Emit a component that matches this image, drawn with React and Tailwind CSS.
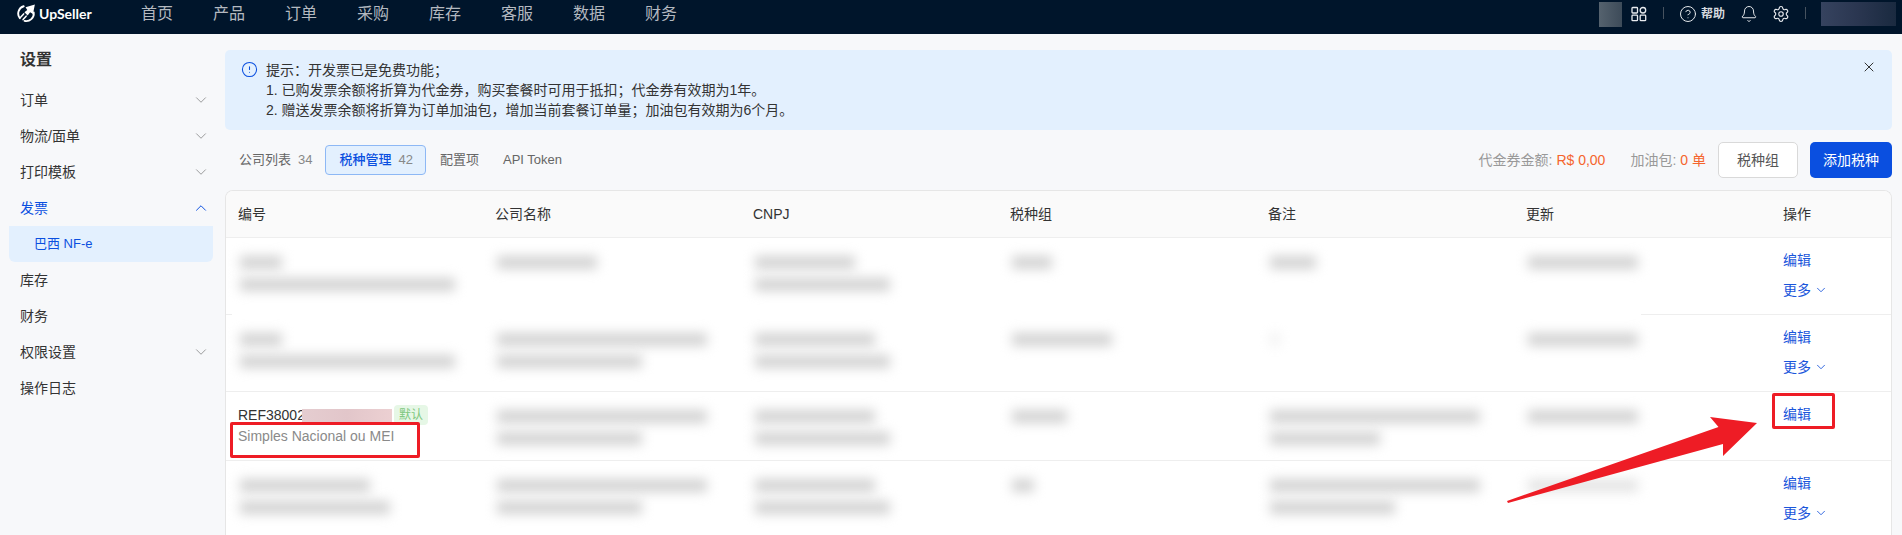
import { Bell, ChevronDown, ChevronUp, CircleAlert, CircleHelp, Settings, X } from 'lucide-react'

const navItems = ['首页', '产品', '订单', '采购', '库存', '客服', '数据', '财务']

const menuItems = [
  { label: '订单', arrow: true },
  { label: '物流/面单', arrow: true },
  { label: '打印模板', arrow: true },
  { label: '发票', open: true },
  { label: '巴西 NF-e', sub: true },
  { label: '库存' },
  { label: '财务' },
  { label: '权限设置', arrow: true },
  { label: '操作日志' },
]

const columns = ['编号', '公司名称', 'CNPJ', '税种组', '备注', '更新', '操作']

// blurred cell contents, one array per column
const rows = [
  {
    height: 'h-[76px]',
    cells: [
      ['w-[42px]', 'w-[215px]'],
      ['w-[100px]'],
      ['w-[100px]', 'w-[135px]'],
      ['w-[40px]'],
      ['w-[46px]'],
      ['w-[110px]'],
    ],
    more: true,
  },
  {
    height: 'h-[76px]',
    cells: [
      ['w-[42px]', 'w-[215px]'],
      ['w-[210px]', 'w-[145px]'],
      ['w-[120px]', 'w-[135px]'],
      ['w-[100px]'],
      ['w-[10px] opacity-30'],
      ['w-[110px]'],
    ],
    more: true,
  },
  {
    height: 'h-[68px]',
    cells: [
      null,
      ['w-[210px]', 'w-[145px]'],
      ['w-[120px]', 'w-[135px]'],
      ['w-[55px]'],
      ['w-[210px]', 'w-[110px]'],
      ['w-[110px]'],
    ],
    more: false,
  },
  {
    height: 'h-[75px]',
    cells: [
      ['w-[130px]', 'w-[150px]'],
      ['w-[210px]', 'w-[145px]'],
      ['w-[120px]', 'w-[135px]'],
      ['w-[22px]'],
      ['w-[210px]', 'w-[125px]'],
      ['w-[110px] opacity-60'],
    ],
    more: true,
  },
]

const BlurLine = ({ width }) => (
  <div className={`h-[13px] bg-[#d2d2d2] blur-[6px] ${width}`}></div>
)

const AppsIcon = () => (
  <svg width="16" height="16" viewBox="0 0 16 16" fill="none" stroke="#e8ebef" strokeWidth="1.3">
    <rect x="1" y="1.5" width="5.5" height="5.5" rx="0.8" />
    <rect x="9.2" y="1.5" width="5.5" height="5.5" rx="2.7" />
    <rect x="1" y="9.2" width="5.5" height="5.5" rx="0.8" />
    <rect x="9.2" y="9.2" width="5.5" height="5.5" rx="0.8" />
  </svg>
)

const Logo = () => (
  <svg width="19" height="19" viewBox="0 0 20 20" fill="none">
    <path d="M7 2.4A8 8 0 0 0 3 15" stroke="#fff" strokeWidth="2" strokeLinecap="round" />
    <path d="M17.6 9A8 8 0 0 1 8 17.8" stroke="#fff" strokeWidth="2" strokeLinecap="round" />
    <path d="M18.8 0.6 16.8 10.4 13.8 8.6 11.2 12 7.8 8.8 10.8 6.2 9 3.4Z" fill="#fff" />
    <path d="M7 10.4 3.8 14M9.6 12.8 6.4 16.4" stroke="#fff" strokeWidth="1.6" strokeLinecap="round" />
  </svg>
)

const App = () => {
  return (
    <div className="h-[535px] w-[1902px] overflow-hidden relative bg-[#f7f8fa] font-['Liberation_Sans','Noto_Sans_CJK_SC',sans-serif] text-[14px] text-[#333]">
      <header className="h-[34px] flex bg-[#00152b] overflow-hidden">
        <div className="w-[141px] shrink-0 flex items-start pl-[17px] pt-[4px] gap-[3px]">
          <Logo />
          <span className="font-['Lato',sans-serif] text-[14px] leading-[20px] font-bold text-white">UpSeller</span>
        </div>
        <nav className="flex gap-[40px] pt-[2px]">
          {navItems.map((item) => (
            <span key={item} className="text-[16px] leading-[24px] text-[#b4b9c0]">{item}</span>
          ))}
        </nav>
        <div className="ml-auto flex items-start text-[#e8ebef]">
          <div className="w-[23px] h-[25px] mt-[2px] bg-[linear-gradient(90deg,#55626e,#3d4b59)]"></div>
          <div className="ml-[9px] mt-[6px]"><AppsIcon /></div>
          <div className="ml-[16px] mt-[7px] w-px h-[12px] bg-[#46525f]"></div>
          <CircleHelp size={18} strokeWidth={1.3} className="ml-[15px] mt-[5px]" />
          <span className="ml-[4px] mt-[4px] text-[12px] leading-[20px] font-bold text-[#d5d9de]">帮助</span>
          <Bell size={18} strokeWidth={1.3} className="ml-[15px] mt-[5px]" />
          <Settings size={18} strokeWidth={1.5} className="ml-[14px] mt-[5px]" />
          <div className="ml-[15px] mt-[7px] w-px h-[12px] bg-[#46525f]"></div>
          <div className="ml-[15px] mr-[6px] mt-[2px] w-[75px] h-[24px] bg-[linear-gradient(90deg,#36435f,#2a3650,#1a2a40)]"></div>
        </div>
      </header>

      <div className="flex">
        <aside className="w-[225px] shrink-0 pt-[14px]">
          <h2 className="pl-[20px] text-[16px] leading-[24px] font-semibold text-[#333] mb-[10px]">设置</h2>
          {menuItems.map((item) => (
            <div
              key={item.label}
              className={`h-9 mx-[9px] flex items-center rounded-b-md ${item.sub ? 'w-[204px] pl-[25px] bg-[#e3f0fe] text-[13px] text-[#0a4fe0]' : 'pl-[11px]'} ${item.open ? 'text-[#0a4fe0]' : ''}`}
            >
              <span>{item.label}</span>
              {item.arrow && <ChevronDown size={18} strokeWidth={1.1} className="ml-auto mr-[6px] text-[#888]" />}
              {item.open && <ChevronUp size={18} strokeWidth={1.3} className="ml-auto mr-[6px] text-[#0a4fe0]" />}
            </div>
          ))}
        </aside>

        <main className="flex-1 min-w-0 pr-[10px] pt-4">
          <div className="h-20 rounded-[5px] bg-[#e3f0fe] flex pl-4 pt-[10px] pr-[16px]">
            <CircleAlert size={17} strokeWidth={1.5} className="text-[#0a4fe0] mt-[1px] shrink-0" />
            <div className="ml-[8px] text-[14px] leading-[20px] text-[#333]">
              <p>提示：开发票已是免费功能；</p>
              <p>1. 已购发票余额将折算为代金券，购买套餐时可用于抵扣；代金券有效期为1年。</p>
              <p>2. 赠送发票余额将折算为订单加油包，增加当前套餐订单量；加油包有效期为6个月。</p>
            </div>
            <X size={16} strokeWidth={1.5} className="ml-auto mr-[-1px] text-[#333] mt-[-1px]" />
          </div>

          <div className="mt-3 h-9 flex items-center text-[13px]">
            <div className="pl-[14px] pr-[13px] text-[#666]">公司列表<span className="ml-[7px] text-[#888]">34</span></div>
            <div className="h-[30px] pl-[13px] pr-[12px] flex items-center rounded-[4px] border border-[#8db8f5] bg-[#e3f0fe] font-medium text-[#0a4fe0]">
              税种管理<span className="ml-[7px] font-normal text-[#888]">42</span>
            </div>
            <div className="pl-[14px] pr-[13px] text-[#666]">配置项</div>
            <div className="px-[11px] text-[#666]">API Token</div>
            <div className="ml-auto flex items-center text-[14px]">
              <span className="text-[#999]">代金券金额:</span>
              <span className="ml-[4px] text-[#f5652d]">R$ 0,00</span>
              <span className="ml-[25px] text-[#999]">加油包:</span>
              <span className="ml-[4px] text-[#f5652d]">0 单</span>
              <button className="ml-[12px] w-[80px] h-9 rounded-[5px] border border-[#d9d9d9] bg-white text-[#555]">税种组</button>
              <button className="ml-[12px] w-[82px] h-9 rounded-[5px] bg-[#0a4fe0] text-white">添加税种</button>
            </div>
          </div>

          <div className="mt-3 rounded-t-[8px] border border-b-0 border-[#e6e6e6] bg-white overflow-hidden">
            <div className="h-[47px] grid grid-cols-[257px_258px_257px_258px_258px_257px_1fr] items-center bg-[#fafafa] border-b border-[#eee] text-[#333]">
              {columns.map((col) => (
                <div key={col} className="pl-3">{col}</div>
              ))}
            </div>

            {rows.map((row, i) => (
              <div key={i}>
                <div className={`${row.height} grid grid-cols-[257px_258px_257px_258px_258px_257px_1fr] overflow-hidden`}>
                  {row.cells.map((lines, c) =>
                    lines ? (
                      <div key={c} className="pl-[14px] pt-[18px] flex flex-col gap-[9px]">
                        {lines.map((width, l) => <BlurLine key={l} width={width} />)}
                      </div>
                    ) : (
                      <div key={c} className="pl-3 pt-[13px]">
                        <div className="flex items-center h-[20px]">
                          <span className="whitespace-nowrap text-[#333]">REF38002</span>
                          <div className="relative ml-[-3px] w-[90px] h-[13px] bg-[linear-gradient(90deg,#e5cdd0,#e2c6ca,#ecd0d2)]"></div>
                          <span className="ml-[2px] px-[5px] rounded-[4px] bg-[#e6f7e6] text-[12px] leading-[20px] text-[#7fc77f]">默认</span>
                        </div>
                        <div className="mt-[1px] leading-[20px] text-[#8a8a8a]">Simples Nacional ou MEI</div>
                      </div>
                    )
                  )}
                  <div className="pl-3 pt-[12px] leading-[20px] text-[#1a56db]">
                    <div>编辑</div>
                    {row.more && (
                      <div className="mt-[10px] flex items-center gap-[3px]">
                        更多 <ChevronDown size={14} strokeWidth={1.5} />
                      </div>
                    )}
                  </div>
                </div>
                {i === 0 ? (
                  <div className="h-px flex bg-white">
                    <div className="w-[6px] bg-[#eee]"></div>
                    <div className="ml-auto w-[250px] bg-[#eee]"></div>
                  </div>
                ) : (
                  <div className="h-px bg-[#eee]"></div>
                )}
              </div>
            ))}
          </div>
        </main>
      </div>

      {/* red annotations drawn over the screenshot */}
      <div className="absolute left-[230px] top-[422px] w-[190px] h-[36px] border-[3px] border-[#ee1c25] rounded-[2px]"></div>
      <div className="absolute left-[1772px] top-[393px] w-[63px] h-[36px] border-[3px] border-[#ee1c25] rounded-[2px]"></div>
      <svg className="absolute left-[1500px] top-[410px]" width="270" height="100" viewBox="1500 410 270 100">
        <path d="M1507 501 1718.5 427 1710 417 1757 423 1723 456 1723 444 1508 503Z" fill="#ee1c25" />
      </svg>
    </div>
  )
}

export default App
